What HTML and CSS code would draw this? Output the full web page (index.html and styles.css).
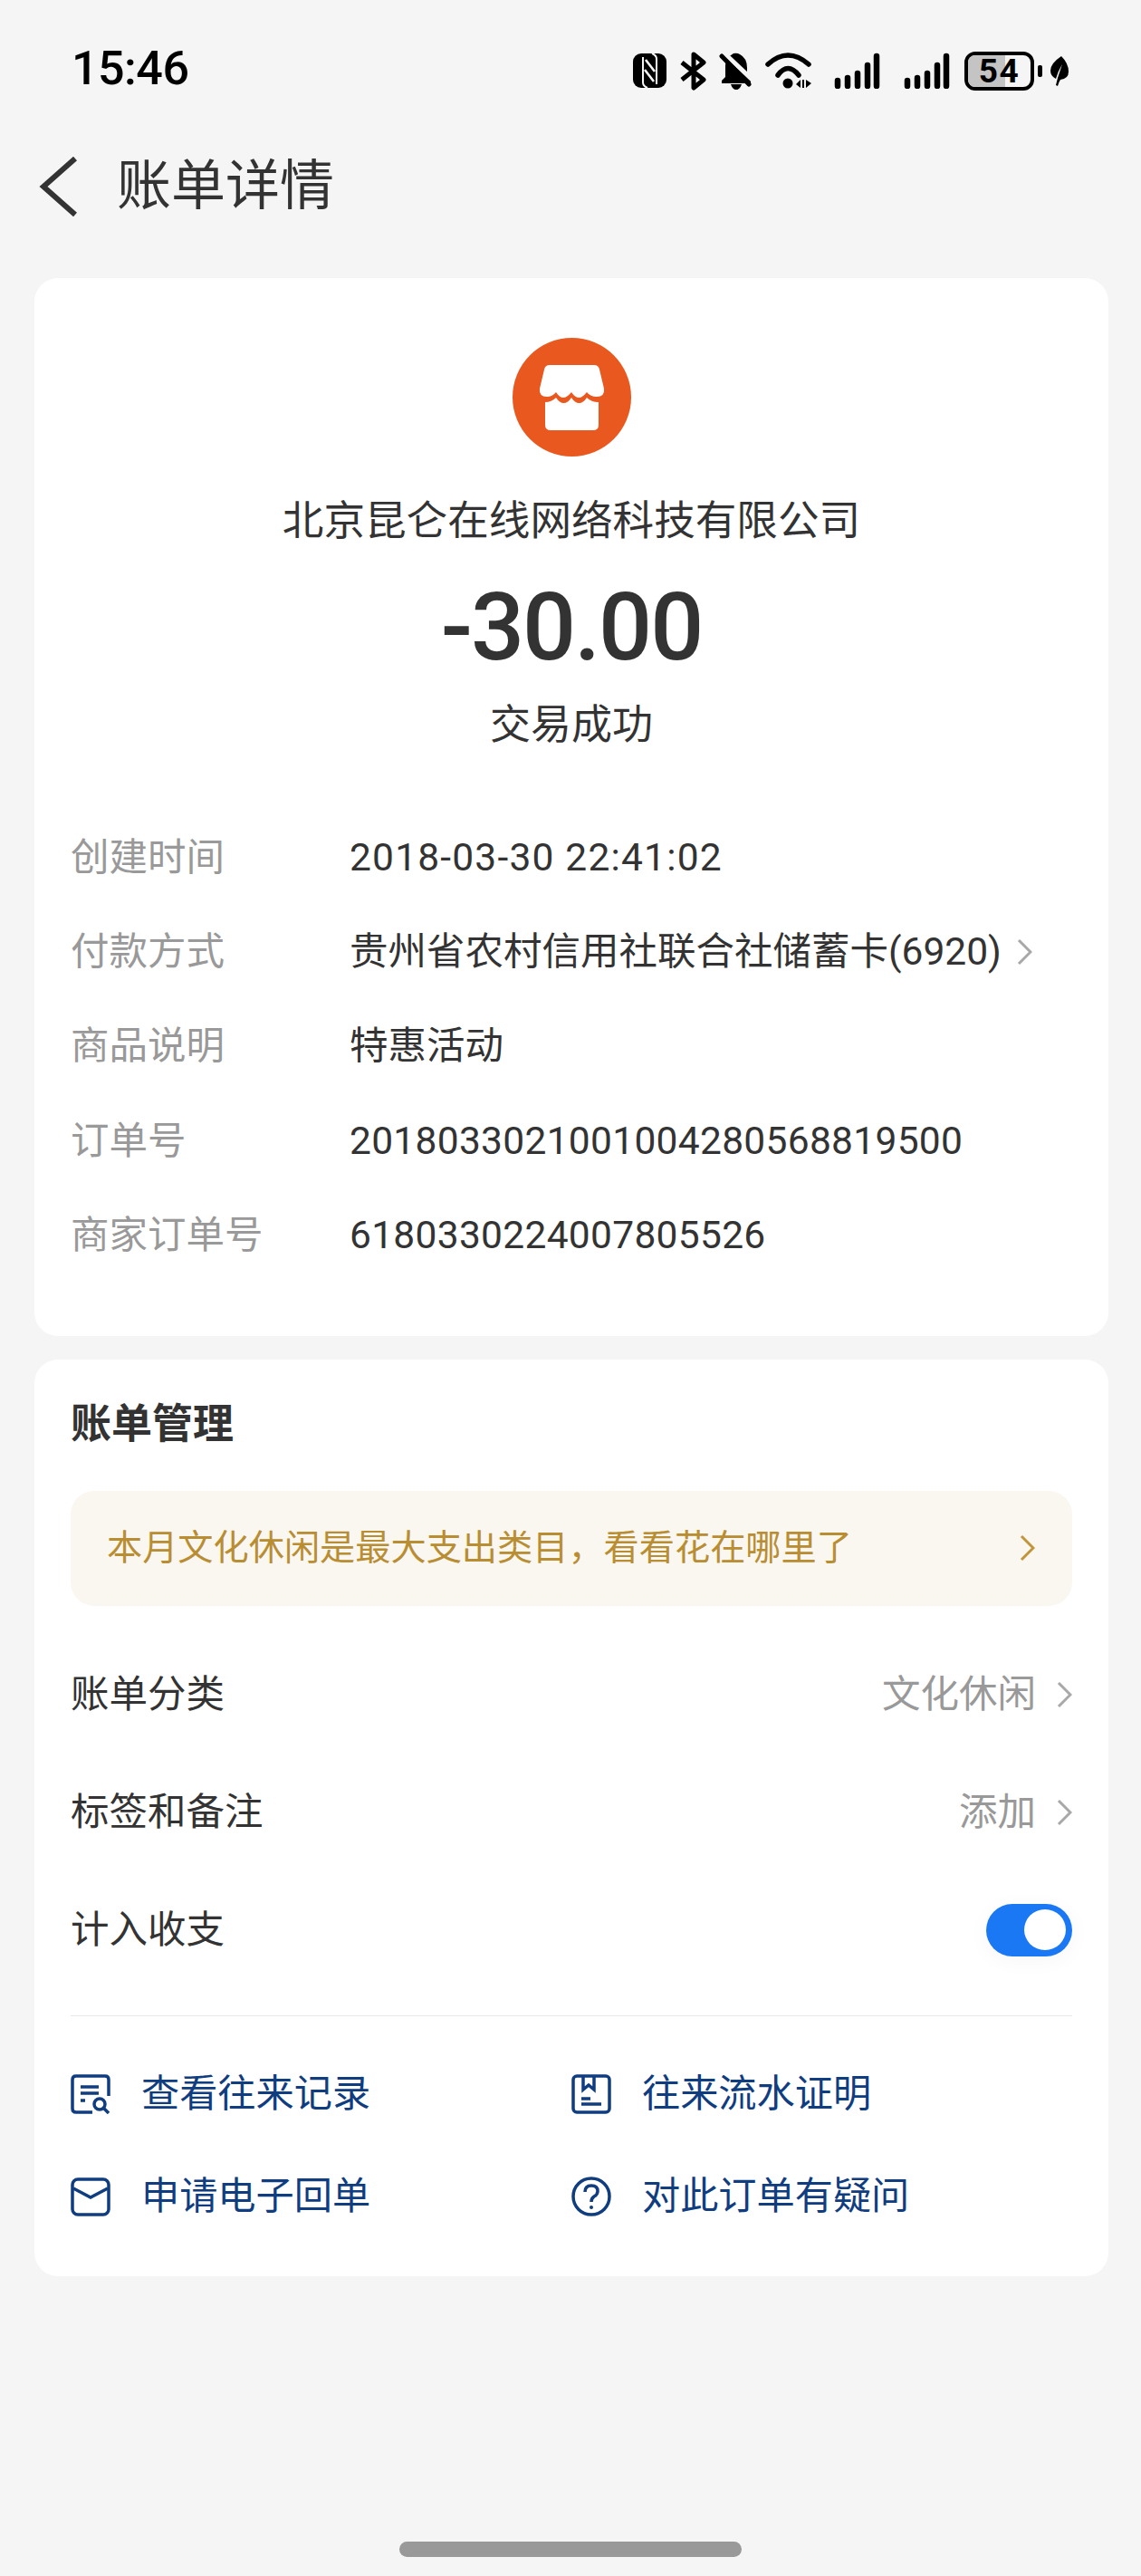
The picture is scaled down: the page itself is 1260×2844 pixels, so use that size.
FILE: index.html
```html
<!DOCTYPE html>
<html>

<head>
  <meta charset="UTF-8">
  <title>账单详情</title>
  <link rel="stylesheet" href="styles.css">
</head>

<body>
  <div class="status-bar">
    <span class="time">15:46</span>
    <div class="status-icons">
      <!-- nfc -->
      <svg class="ic-nfc" width="37" height="38" viewBox="0 0 37 38">
        <rect width="37" height="38" rx="9" fill="#000" />
        <path fill="none" stroke="#f5f5f5" stroke-width="2" d="M11 4V32Q11 36 16 38M26 34V6Q26 2 21 0" />
        <path fill="none" stroke="#f5f5f5" stroke-width="2.6" d="M14 7L24 20M13 18L23 31" />
      </svg>
      <!-- bluetooth -->
      <svg class="ic-bt" width="29" height="43" viewBox="0 0 29 43">
        <path fill="none" stroke="#000" stroke-width="5" stroke-linejoin="round" stroke-linecap="butt" d="M2 12L26 31L15 40V3L26 12L2 31" />
      </svg>
      <!-- muted bell -->
      <svg class="ic-bell" width="36" height="41" viewBox="0 0 36 41">
        <path fill="#000" d="M16 1Q20 0 23 2Q31 6 31 17V27L35 31V34H3V31L7 27V14Q7 6 16 1ZM13 35H25Q23 41 19 41Q15 41 13 35Z" />
        <path fill="none" stroke="#f5f5f5" stroke-width="5" d="M5 0L41 34" />
        <path fill="none" stroke="#000" stroke-width="5" stroke-linecap="round" d="M3 4L33 35" />
      </svg>
      <!-- wifi -->
      <svg class="ic-wifi" width="52" height="41" viewBox="0 0 52 41">
        <path fill="none" stroke="#000" stroke-width="5.5" stroke-linecap="round" d="M3 13Q25 -7 48 13M14 25Q25 10 37 25" />
        <circle cx="25" cy="34" r="5.5" fill="#000" />
        <path fill="#000" d="M39 30V39L34 35ZM41 30V39H43V30ZM45 30L51 34L45 39Z" />
      </svg>
      <svg class="ic-signal" width="51" height="40" viewBox="0 0 51 40">
        <path stroke="#000" stroke-width="6.5" stroke-linecap="round" d="M4 31V37M15 28V37M26 23V37M37 14V37M47 4V37" />
      </svg>
      <svg class="ic-signal ic-signal-2" width="51" height="40" viewBox="0 0 51 40">
        <path stroke="#000" stroke-width="6.5" stroke-linecap="round" d="M4 31V37M15 28V37M26 23V37M37 14V37M47 4V37" />
      </svg>
      <div class="battery">
        <div class="battery-body">
          <div class="battery-fill"></div>
          <span class="battery-num">54</span>
        </div>
        <div class="battery-cap"></div>
      </div>
      <svg class="ic-leaf" width="20" height="33" viewBox="0 0 20 33">
        <path fill="#000" d="M12 0Q20 8 20 17Q20 25 11 26Q9 29 8 33L6 32Q7 28 8 24Q11 15 13 9Q8 17 6 25Q0 22 0 16Q0 8 12 0Z" />
      </svg>
    </div>
  </div>

  <div class="nav">
    <svg class="back" width="44" height="66" viewBox="0 0 44 66">
      <path fill="none" stroke="#333" stroke-width="6" d="M42 2L7 33L42 64" />
    </svg>
    <h1>账单详情</h1>
  </div>

  <main class="content">
    <section class="card detail">
      <svg class="shop-logo" width="131" height="131" viewBox="0 0 131 131">
        <circle cx="65.5" cy="65.5" r="65.5" fill="#e9581f" />
        <path fill="#fff" d="M41 30H90Q95 30 96 35L101 56Q102 65 93 65Q86 65 82 60Q77 66 73.5 66Q69 66 65 60Q60 66 56 66Q52 66 48 60Q44 65 38 65Q29 65 30 56L35 35Q36 30 41 30Z" />
        <path fill="#fff" d="M36 71Q43 71 48 66Q52 72 56.5 72Q61 72 65 66Q69 72 73.5 72Q78 72 82 66Q87 71 95 71V96Q95 102 89 102H42Q36 102 36 96Z" />
      </svg>
      <div class="merchant">北京昆仑在线网络科技有限公司</div>
      <div class="amount">-30.00</div>
      <div class="state">交易成功</div>

      <dl class="info">
        <div class="info-row">
          <dt>创建时间</dt>
          <dd class="date">2018-03-30 22:41:02</dd>
        </div>
        <div class="info-row">
          <dt>付款方式</dt>
          <dd>贵州省农村信用社联合社储蓄卡(6920)
            <svg class="chev" width="17" height="30" viewBox="0 0 17 30"><path d="M2 2L15 15L2 28" /></svg>
          </dd>
        </div>
        <div class="info-row">
          <dt>商品说明</dt>
          <dd>特惠活动</dd>
        </div>
        <div class="info-row">
          <dt>订单号</dt>
          <dd class="num">2018033021001004280568819500</dd>
        </div>
        <div class="info-row">
          <dt>商家订单号</dt>
          <dd class="num">6180330224007805526</dd>
        </div>
      </dl>
    </section>

    <section class="card manage">
      <h2>账单管理</h2>
      <div class="tip">
        <span>本月文化休闲是最大支出类目，看看花在哪里了</span>
        <svg class="chev chev-gold" width="17" height="30" viewBox="0 0 17 30"><path d="M2 2L15 15L2 28" /></svg>
      </div>

      <div class="row row-first">
        <span>账单分类</span>
        <div class="row-val">文化休闲
          <svg class="chev" width="17" height="30" viewBox="0 0 17 30"><path d="M2 2L15 15L2 28" /></svg>
        </div>
      </div>
      <div class="row">
        <span>标签和备注</span>
        <div class="row-val">添加
          <svg class="chev" width="17" height="30" viewBox="0 0 17 30"><path d="M2 2L15 15L2 28" /></svg>
        </div>
      </div>
      <div class="row">
        <span>计入收支</span>
        <div class="toggle"><div class="knob"></div></div>
      </div>

      <div class="links">
        <a class="link">
          <svg width="44" height="44" viewBox="0 0 44 44">
            <path d="M24 42H6Q2 42 2 38V6Q2 2 6 2H38Q42 2 42 6V24" />
            <path d="M11 14H31M11 21H31M11 29H16" />
            <circle cx="32" cy="33" r="6" />
            <path d="M37 38L42 43" />
          </svg>
          查看往来记录
        </a>
        <a class="link">
          <svg width="44" height="44" viewBox="0 0 44 44">
            <rect x="2" y="2" width="40" height="40" rx="4" />
            <path d="M13 3V17L19 12L25 17V3M11 27H21M11 33H33" />
          </svg>
          往来流水证明
        </a>
        <a class="link">
          <svg width="44" height="44" viewBox="0 0 44 44">
            <rect x="2" y="3" width="40" height="39" rx="6" />
            <path d="M3 13L22 23L41 13" />
          </svg>
          申请电子回单
        </a>
        <a class="link">
          <svg width="44" height="44" viewBox="0 0 44 44">
            <circle cx="22" cy="22" r="20" />
            <path d="M15 17Q15 10 22 10Q29 10 29 16Q29 20 25 22Q22 24 22 28" />
            <circle class="dot" cx="22" cy="34" r="2" />
          </svg>
          对此订单有疑问
        </a>
      </div>
    </section>
  </main>

  <div class="home-bar"></div>
</body>

</html>
```

FILE: styles.css
```css
html, body {
  margin: 0;
  padding: 0;
}

body {
  width: 1260px;
  height: 2844px;
  background: #f5f5f5;
  color: #333;
  font-family: "Roboto", "Noto Sans CJK SC", sans-serif;
  display: flex;
  flex-direction: column;
  overflow: hidden;
}

.status-bar {
  height: 76px;
  padding: 40px 80px 0 79px;
  display: flex;
  justify-content: space-between;
  align-items: center;
  flex-shrink: 0;
}

.time {
  font-size: 52px;
  line-height: 60px;
  font-weight: 500;
  color: #000;
  letter-spacing: -0.5px;
  margin-bottom: 4px;
}

.status-icons {
  display: flex;
  align-items: center;
}

.status-icons svg {
  display: block;
}

.ic-nfc { margin-right: 15px; }
.ic-bt { margin-right: 14px; }
.ic-bell { margin-right: 15px; }
.ic-wifi { margin-right: 24px; }
.ic-signal { margin-right: 26px; }
.ic-signal-2 { margin-right: 16px; }

.battery {
  display: flex;
  align-items: center;
  margin-right: 9px;
}

.battery-body {
  width: 77px;
  height: 43px;
  box-sizing: border-box;
  border: 4px solid #000;
  border-radius: 12px;
  position: relative;
  overflow: hidden;
  display: flex;
  justify-content: center;
  align-items: center;
}

.battery-fill {
  position: absolute;
  left: 0;
  top: 0;
  bottom: 0;
  width: 60%;
  background: #c4c4c4;
}

.battery-num {
  position: relative;
  font-size: 37px;
  font-weight: 700;
  color: #000;
  line-height: 1;
  letter-spacing: 1.5px;
}

.battery-cap {
  width: 5px;
  height: 13px;
  margin-left: 4px;
  background: #000;
  border-radius: 2px;
}

.nav {
  height: 110px;
  margin-top: 34.5px;
  padding-left: 41px;
  display: flex;
  align-items: center;
  flex-shrink: 0;
}

.nav h1 {
  margin: 0 0 0 44px;
  font-size: 60px;
  line-height: 80px;
  font-weight: 400;
  color: #333;
}

.back {
  display: block;
}

.content {
  padding: 0 36px 0 38px;
  margin-top: 46px;
  display: flex;
  flex-direction: column;
  gap: 26px;
}

.card {
  background: #fff;
  border-radius: 26px;
}

.detail {
  height: 1168px;
  padding-top: 66px;
  box-sizing: border-box;
  display: flex;
  flex-direction: column;
  align-items: center;
}

.shop-logo {
  display: block;
  margin-bottom: 38px;
}

.merchant {
  font-size: 45.6px;
  line-height: 68px;
}

.amount {
  margin-top: 18px;
  font-size: 104px;
  line-height: 130px;
  font-weight: 500;
  letter-spacing: -2px;
}

.state {
  margin-top: 11px;
  font-size: 45px;
  line-height: 64px;
}

.info {
  align-self: stretch;
  margin: 62px 40px 0 40px;
}

.info-row {
  height: 104.4px;
  display: flex;
  align-items: center;
  font-size: 42.5px;
  line-height: 60px;
}

.info-row dt {
  width: 308px;
  color: #999;
}

.info-row dd {
  margin: 0;
  display: flex;
  align-items: center;
}

.info-row .date {
  letter-spacing: 1.2px;
}

.info-row .num {
  letter-spacing: 0.3px;
}

.info-row .chev {
  margin-left: 17px;
}

.chev {
  display: block;
  flex-shrink: 0;
}

.chev path {
  fill: none;
  stroke: #a8a8a8;
  stroke-width: 3;
}

.chev-gold path {
  stroke: #c2953c;
}

.manage {
  height: 1012px;
  padding: 40px 40px 0;
  box-sizing: border-box;
}

.manage h2 {
  margin: 0;
  font-size: 45px;
  line-height: 64px;
  font-weight: 700;
}

.tip {
  margin-top: 41px;
  height: 127px;
  padding: 0 41px 0 40px;
  border-radius: 26px;
  background: #faf7f1;
  color: #b98d32;
  font-size: 39.2px;
  line-height: 60px;
  display: flex;
  justify-content: space-between;
  align-items: center;
}

.row {
  height: 130px;
  display: flex;
  justify-content: space-between;
  align-items: center;
  font-size: 42.5px;
  line-height: 60px;
}

.row-first {
  margin-top: 33px;
}

.row-val {
  display: flex;
  align-items: center;
  gap: 23px;
  color: #999;
}

.toggle {
  width: 95px;
  height: 58px;
  border-radius: 29px;
  background: #1a78f5;
  box-shadow: 0 4px 24px rgba(0, 0, 0, 0.04);
  display: flex;
  align-items: center;
  justify-content: flex-end;
  padding-right: 7px;
  box-sizing: border-box;
}

.knob {
  width: 46px;
  height: 45px;
  border-radius: 50%;
  background: #fff;
}

.links {
  margin-top: 29px;
  padding-top: 64.5px;
  border-top: 1px solid #e8e8e8;
  display: grid;
  grid-template-columns: 553px 1fr;
  row-gap: 68.5px;
}

.link {
  display: flex;
  align-items: center;
  gap: 34px;
  font-size: 42.2px;
  line-height: 44px;
  color: #0f3d7f;
}

.link svg {
  display: block;
  flex-shrink: 0;
  fill: none;
  stroke: #0f3d7f;
  stroke-width: 3.5;
}

.link .dot {
  fill: #0f3d7f;
  stroke: none;
}

.home-bar {
  position: absolute;
  left: 441px;
  top: 2806px;
  width: 378px;
  height: 17px;
  border-radius: 9px;
  background: #999;
}
```
